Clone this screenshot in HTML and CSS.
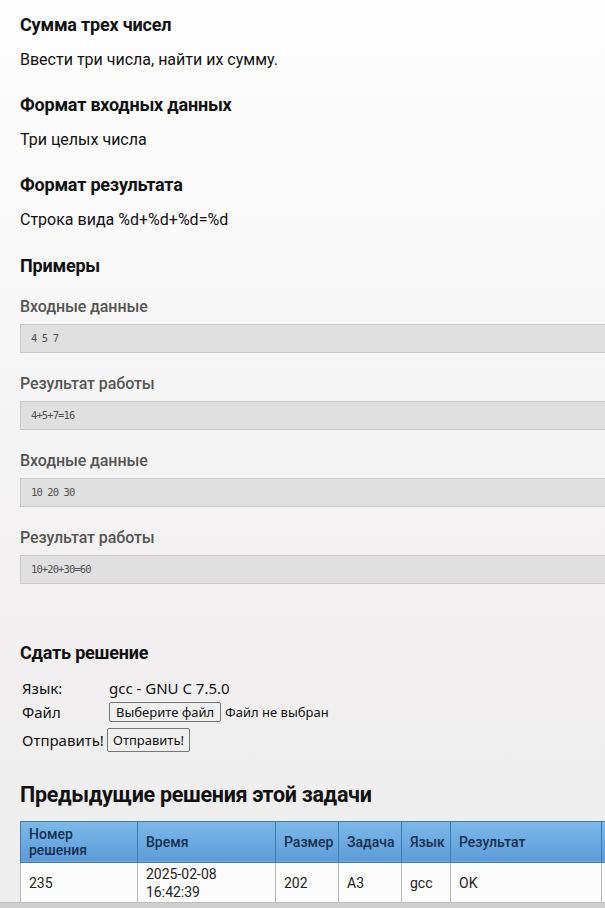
FILE: index.html
```html
<!DOCTYPE html>
<html lang="ru">
<head>
<meta charset="utf-8">
<title>Сумма трех чисел</title>
<link rel="stylesheet" href="styles.css">
</head>
<body>
<main class="page">
  <section class="problem">
    <h2 class="h">Сумма трех чисел</h2>
    <p class="txt">Ввести три числа, найти их сумму.</p>
    <h2 class="h">Формат входных данных</h2>
    <p class="txt">Три целых числа</p>
    <h2 class="h">Формат результата</h2>
    <p class="txt">Строка вида %d+%d+%d=%d</p>
    <h2 class="h examples">Примеры</h2>
    <h3 class="sub">Входные данные</h3>
    <pre class="box">4 5 7</pre>
    <h3 class="sub">Результат работы</h3>
    <pre class="box">4+5+7=16</pre>
    <h3 class="sub">Входные данные</h3>
    <pre class="box">10 20 30</pre>
    <h3 class="sub">Результат работы</h3>
    <pre class="box">10+20+30=60</pre>
  </section>

  <section class="submit">
    <h2 class="h">Сдать решение</h2>
    <table class="form">
      <tr><td class="lbl">Язык:</td><td>gcc - GNU C 7.5.0</td></tr>
      <tr><td class="lbl">Файл</td><td><button class="btn">Выберите файл</button> <span class="nofile">Файл не выбран</span></td></tr>
      <tr class="last"><td class="lbl">Отправить!</td><td><button class="btn btn-send">Отправить!</button></td></tr>
    </table>
  </section>

  <section class="prev">
    <h2 class="big">Предыдущие решения этой задачи</h2>
    <table class="runs">
      <colgroup>
        <col class="c1"><col class="c2"><col class="c3"><col class="c4"><col class="c5"><col class="c6"><col class="c7">
      </colgroup>
      <thead>
        <tr>
          <th>Номер решения</th>
          <th>Время</th>
          <th>Размер</th>
          <th>Задача</th>
          <th>Язык</th>
          <th>Результат</th>
          <th></th>
        </tr>
      </thead>
      <tbody>
        <tr>
          <td>235</td>
          <td>2025-02-08 16:42:39</td>
          <td>202</td>
          <td>A3</td>
          <td>gcc</td>
          <td>OK</td>
          <td></td>
        </tr>
      </tbody>
    </table>
  </section>
</main>
<div class="hscroll"></div>
</body>
</html>
```

FILE: styles.css
```css
html, body {
  margin: 0;
  padding: 0;
}
body {
  font-family: Roboto, "Noto Sans", sans-serif;
  color: #111;
  background: linear-gradient(#fefefe 0px, #f6f5f5 400px, #f1efef 640px, #eeeeee 908px);
  min-height: 908px;
  overflow: hidden;
}
.page {
  padding: 13px 0 0 20px;
  width: 760px;
}
.h {
  font-size: 18px;
  font-weight: 700;
  margin: 0;
  line-height: 24px;
  letter-spacing: -0.2px;
}
.txt {
  font-size: 16px;
  margin: 12.6px 0 23.6px;
  line-height: 20px;
}
.examples {
  margin-bottom: 18px;
}
.sub {
  font-size: 16px;
  font-weight: 500;
  color: #555;
  margin: 0 0 6px;
  line-height: 22px;
  letter-spacing: -0.1px;
}
.box {
  margin: 0 0 20px;
  background: #e0e0e0;
  border: 1px solid #c9c9c9;
  height: 27px;
  box-sizing: content-box;
  padding: 0 10px;
  font-family: "DejaVu Sans Mono", monospace;
  font-size: 10.5px;
  letter-spacing: -0.9px;
  line-height: 27px;
  color: #505050;
  width: 700px;
}
.submit {
  margin-top: 57px;
}
.form {
  margin-top: 10px;
  border-collapse: separate;
  border-spacing: 2px;
  margin-left: -1px;
  font-family: "Noto Sans", "Liberation Sans", sans-serif;
  font-size: 15px;
  color: #111;
}
.form td {
  padding: 0;
  height: 22px;
}
.form .last td {
  height: 27px;
  padding-top: 2px;
}
.form .lbl {
  width: 85px;
  padding-left: 1px;
}
.btn {
  font-family: "Noto Sans", "Liberation Sans", sans-serif;
  font-size: 13px;
  color: #111;
  background: #efefef;
  border: 1px solid #767676;
  border-radius: 2px;
  padding: 1px 6px;
  line-height: 16px;
}
.btn-send {
  padding: 3px 5px;
  margin-left: -2px;
}
.nofile {
  font-size: 13px;
}
.prev {
  margin-top: 25px;
}
.big {
  font-size: 21.5px;
  font-weight: 700;
  margin: 0 0 12px;
  line-height: 28px;
  letter-spacing: -0.3px;
}
.runs {
  border-collapse: collapse;
  font-size: 14px;
  width: 700px;
  table-layout: fixed;
}
.runs th {
  background: linear-gradient(#7cb9ea, #5c9bd8);
  color: #16304f;
  font-weight: 500;
  font-size: 14px;
  text-align: left;
  padding: 4px 8px;
  border: 1px solid #3f78b5;
  line-height: 16px;
  height: 32px;
  box-sizing: content-box;
}
.runs td {
  background: #fcfcfc;
  border: 1px solid #b8b8b8;
  border-top: none;
  padding: 2px 8px;
  line-height: 18px;
  color: #222;
}
.c1 { width: 117px; }
.c2 { width: 138px; }
.c3 { width: 63px; }
.c4 { width: 63px; }
.c5 { width: 49px; }
.c6 { width: 151px; }
.c7 { width: 119px; }
.hscroll {
  position: fixed;
  left: 0;
  right: 0;
  bottom: 0;
  height: 5px;
  background: #cfcfcf;
  border-top: 1px solid #bdbdbd;
}
```
